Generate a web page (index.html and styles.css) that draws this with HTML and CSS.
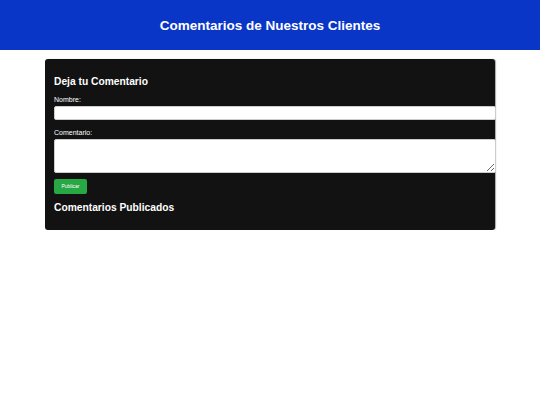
FILE: index.html
```html
<!DOCTYPE html>
<html lang="es">
<head>
<meta charset="utf-8">
<title>Comentarios de Nuestros Clientes</title>
<link rel="stylesheet" href="styles.css">
</head>
<body>
<header class="site-header">
  <h1 class="site-title">Comentarios de Nuestros Clientes</h1>
</header>
<main class="card">
  <h2 class="card-title">Deja tu Comentario</h2>
  <form class="comment-form">
    <label class="field-label" for="nombre">Nombre:</label>
    <input class="field-input" id="nombre" type="text">
    <label class="field-label" for="comentario">Comentario:</label>
    <textarea class="field-textarea" id="comentario"></textarea>
    <button class="publish-btn" type="button">Publicar</button>
  </form>
  <h2 class="card-title published-title">Comentarios Publicados</h2>
</main>
</body>
</html>
```
FILE: styles.css
```css
html, body {
  margin: 0;
  padding: 0;
  background: #ffffff;
  font-family: "Liberation Sans", Arial, sans-serif;
}

.site-header {
  background: #0a36c8;
  height: 50px;
  display: flex;
  align-items: center;
  justify-content: center;
}

.site-title {
  margin: 0;
  padding-top: 1px;
  color: #ffffff;
  font-size: 13.5px;
  font-weight: bold;
  line-height: 16px;
}

.card {
  box-sizing: border-box;
  width: 450px;
  margin: 9px auto 0;
  padding: 9px 9px 8px;
  background: #121212;
  border-radius: 3px;
  color: #ffffff;
  box-shadow: 1px 0 1px rgba(0, 0, 0, 0.35);
}

.card-title {
  margin: 7.5px 0 9px;
  font-size: 10.25px;
  line-height: 11.5px;
  font-weight: bold;
}

.published-title {
  margin: 8.5px 0 8px;
}

.comment-form {
  display: flex;
  flex-direction: column;
  align-items: flex-start;
}

.field-label {
  display: block;
  font-size: 7px;
  line-height: 8px;
  margin-bottom: 2px;
}

.field-input,
.field-textarea {
  box-sizing: content-box;
  width: 100%;
  padding: 0 4px;
  border: 1px solid #cccccc;
  border-radius: 2px;
  background: #ffffff;
  font-family: "Liberation Sans", Arial, sans-serif;
  font-size: 7px;
  margin: 0;
}

.field-input {
  height: 12px;
  margin-bottom: 8.5px;
}

.field-textarea {
  height: 32px;
  margin-top: 0;
  display: block;
}

.publish-btn {
  margin-top: 6px;
  width: 33px;
  height: 15px;
  padding: 0;
  border: none;
  border-radius: 2px;
  background: #28a745;
  color: #ffffff;
  font-family: "Liberation Sans", Arial, sans-serif;
  font-size: 5px;
  line-height: 15px;
}
```
